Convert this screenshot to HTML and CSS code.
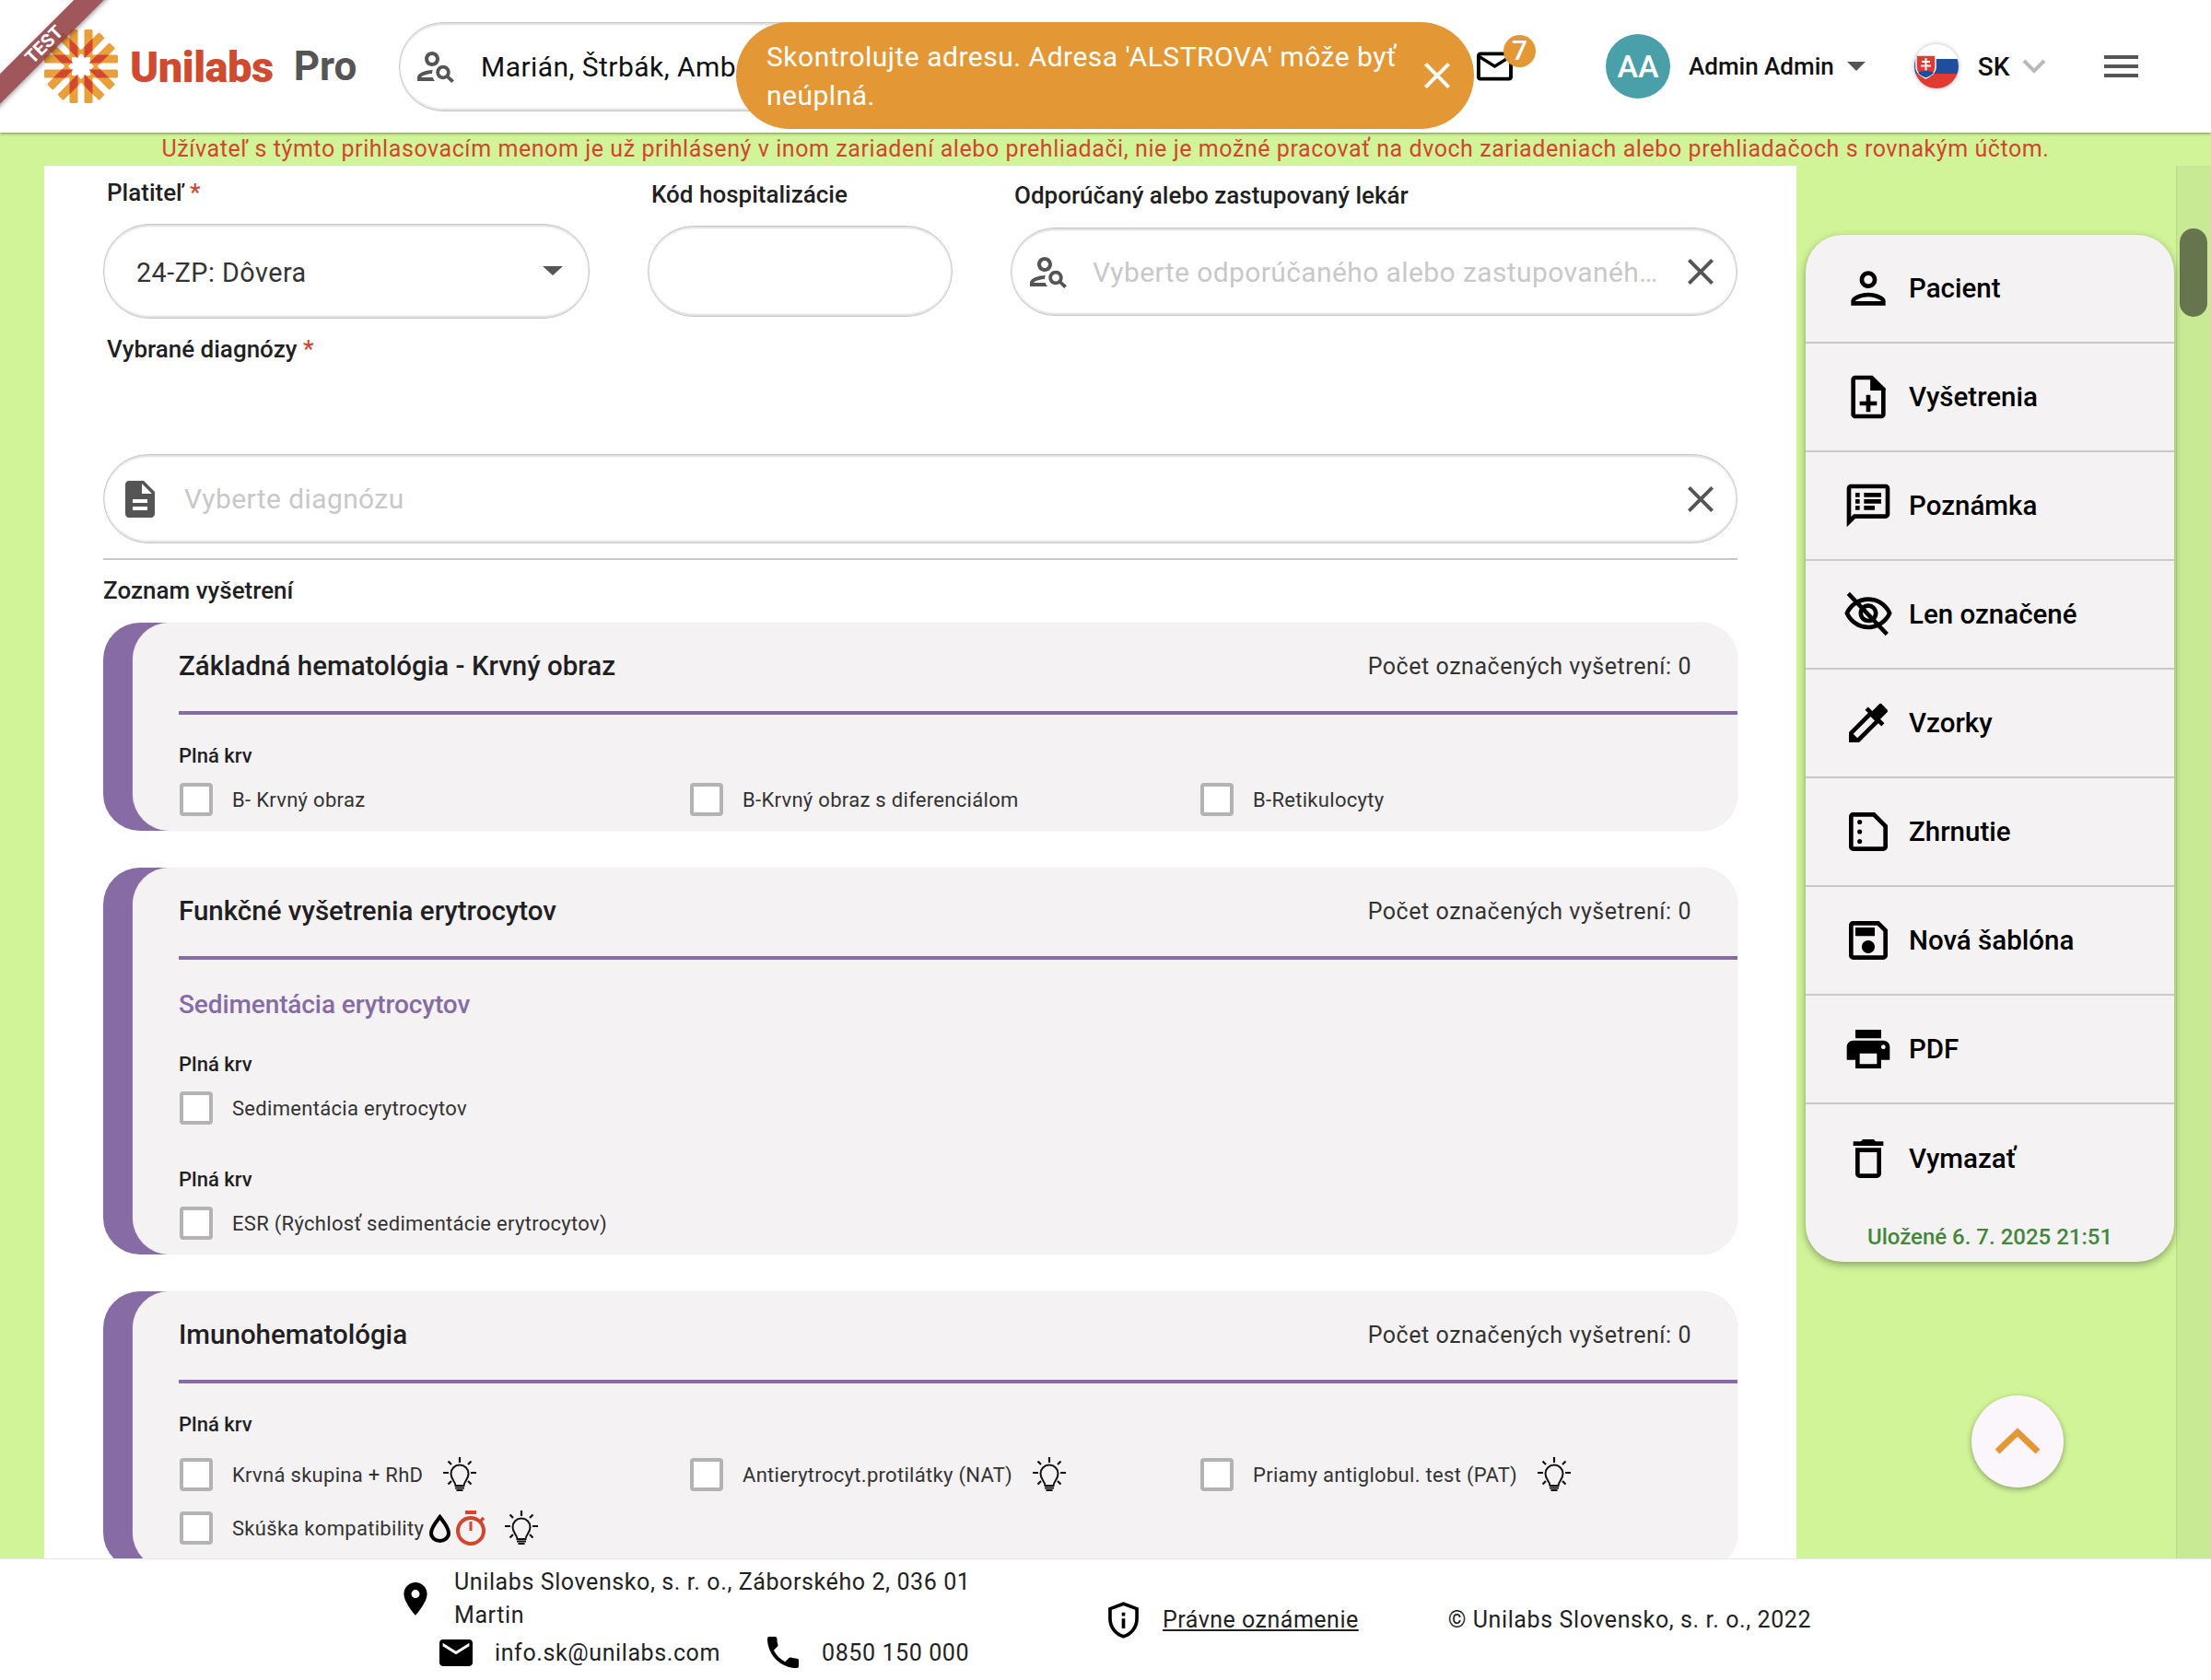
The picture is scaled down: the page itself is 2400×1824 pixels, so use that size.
FILE: index.html
```html
<!DOCTYPE html>
<html lang="sk">
<head>
<meta charset="utf-8">
<title>Unilabs Pro</title>
<link rel="stylesheet" href="styles.css">
</head>
<body>
<svg class="sprite" xmlns="http://www.w3.org/2000/svg">
  <symbol id="i-person-search" viewBox="0 0 24 24"><path d="M10 12c2.21 0 4-1.79 4-4s-1.79-4-4-4-4 1.79-4 4 1.79 4 4 4zm0-6c1.1 0 2 .9 2 2s-.9 2-2 2-2-.9-2-2 .9-2 2-2zM4 18c.22-.72 3.31-2 6-2 0-.7.13-1.37.35-1.99C7.62 13.91 2 15.27 2 18v2h9.54c-.52-.58-.93-1.25-1.19-2H4zm15.29-.73c.36-.59.57-1.27.57-2.02 0-2.13-1.75-3.85-3.86-3.85s-3.86 1.72-3.86 3.85 1.75 3.85 3.86 3.85c.74 0 1.43-.22 2.02-.57L20.59 21 22 19.59l-2.71-2.32zM16 17.2c-1.1 0-2-.9-2-2s.9-2 2-2 2 .9 2 2-.9 2-2 2z"/></symbol>
  <symbol id="i-close" viewBox="0 0 24 24"><path d="M19 6.41L17.59 5 12 10.59 6.41 5 5 6.41 10.59 12 5 17.59 6.41 19 12 13.41 17.59 19 19 17.59 13.41 12z"/></symbol>
  <symbol id="i-person" viewBox="0 0 24 24"><path d="M12 6c1.1 0 2 .9 2 2s-.9 2-2 2-2-.9-2-2 .9-2 2-2m0 10c2.7 0 5.8 1.29 6 2H6c.23-.72 3.31-2 6-2m0-12C9.79 4 8 5.79 8 8s1.79 4 4 4 4-1.79 4-4-1.79-4-4-4zm0 10c-2.67 0-8 1.34-8 4v2h16v-2c0-2.66-5.33-4-8-4z"/></symbol>
  <symbol id="i-note-add" viewBox="0 0 24 24"><path d="M14 2H6c-1.1 0-2 .9-2 2v16c0 1.1.9 2 2 2h12c1.1 0 2-.9 2-2V8l-6-6zm4 18H6V4h7v5h5v11zm-7-9v3H8v2h3v3h2v-3h3v-2h-3v-3h-2z"/><path d="M13 3h1l6 5v1h-7z"/></symbol>
  <symbol id="i-notes" viewBox="0 0 24 24"><path d="M20 2H4c-1.1 0-2 .9-2 2v18l4-4h14c1.1 0 2-.9 2-2V4c0-1.1-.9-2-2-2zm0 14H5.17L4 17.17V4h16v12zM6 6h2v2H6zm0 3h2v2H6zm0 3h2v2H6zm4-6h8v2h-8zm0 3h8v2h-8zm0 3h5v2h-5z"/></symbol>
  <symbol id="i-eye-off" viewBox="0 0 24 24"><path d="M12 6c3.79 0 7.17 2.13 8.82 5.5C19.17 14.87 15.79 17 12 17s-7.17-2.13-8.82-5.5C4.83 8.13 8.21 6 12 6m0-2C7 4 2.73 7.11 1 11.5 2.73 15.89 7 19 12 19s9.27-3.11 11-7.5C21.27 7.11 17 4 12 4zm0 5c1.38 0 2.5 1.12 2.5 2.5S13.38 14 12 14s-2.5-1.12-2.5-2.5S10.62 9 12 9m0-2c-2.48 0-4.5 2.02-4.5 4.5S9.52 16 12 16s4.5-2.02 4.5-4.5S14.48 7 12 7z"/><path d="M3.4 1.6l18 19-1.4 1.4-18-19z"/></symbol>
  <symbol id="i-colorize" viewBox="0 0 24 24"><path d="M20.71 5.63l-2.34-2.34a.996.996 0 00-1.41 0l-3.12 3.12-1.93-1.91-1.41 1.41 1.42 1.42L3 16.25V21h4.75l8.92-8.92 1.42 1.42 1.41-1.41-1.92-1.92 3.12-3.12c.4-.4.4-1.03.01-1.42zM6.92 19L5 17.08l8.06-8.06 1.92 1.92L6.92 19z"/></symbol>
  <symbol id="i-summary" viewBox="0 0 24 24"><path d="M5 3h10l6 6v10c0 1.1-.9 2-2 2H5c-1.1 0-2-.9-2-2V5c0-1.1.9-2 2-2zm0 2v14h14V9.83L14.17 5H5z"/><circle cx="8" cy="7.5" r="1.1"/><circle cx="8" cy="12" r="1.1"/><circle cx="8" cy="16.5" r="1.1"/></symbol>
  <symbol id="i-save" viewBox="0 0 24 24"><path d="M17 3H5c-1.11 0-2 .9-2 2v14c0 1.1.89 2 2 2h14c1.1 0 2-.9 2-2V7l-4-4zm2 16H5V5h11.17L19 7.83V19zm-7-7c-1.66 0-3 1.34-3 3s1.34 3 3 3 3-1.34 3-3-1.34-3-3-3zM6 6h9v4H6z"/></symbol>
  <symbol id="i-print" viewBox="0 0 24 24"><path d="M19 8H5c-1.66 0-3 1.34-3 3v6h4v4h12v-4h4v-6c0-1.66-1.34-3-3-3zm-3 11H8v-5h8v5zm3-7c-.55 0-1-.45-1-1s.45-1 1-1 1 .45 1 1-.45 1-1 1zm-1-9H6v4h12V3z"/></symbol>
  <symbol id="i-delete" viewBox="0 0 24 24"><path d="M6 19c0 1.1.9 2 2 2h8c1.1 0 2-.9 2-2V7H6v12zM8 9h8v10H8V9zm7.5-5l-1-1h-5l-1 1H5v2h14V4z"/></symbol>
  <symbol id="i-doc" viewBox="0 0 24 24"><path d="M14 2H6c-1.1 0-1.99.9-1.99 2L4 20c0 1.1.89 2 1.99 2H18c1.1 0 2-.9 2-2V8l-6-6zm2 16H8v-2h8v2zm0-4H8v-2h8v2zm-3-5V3.5L18.5 9H13z"/></symbol>
  <symbol id="i-bulb" viewBox="0 0 36 38"><path d="M18 0v6M0 17h6M30 17h6M5.500 4.500l3.500 3.500M30.500 4.500L27 8M5.500 29.500L9 26M30.500 29.500L27 26" fill="none" stroke="currentColor" stroke-width="2.200"/><path d="M13.500 31c0-4.500-5-6.500-5-13a9.500 9.500 0 0 1 19 0c0 6.500-5 8.500-5 13z" fill="none" stroke="currentColor" stroke-width="2"/><path d="M13 33.500h10M14.500 36h7" stroke="currentColor" stroke-width="2"/></symbol>
  <symbol id="i-drop" viewBox="0 0 23 31"><path d="M11.500 3C9 6.500 2 14 2 20.500a9.500 8.500 0 0 0 19 0C21 14 14 6.500 11.500 3z" fill="none" stroke="currentColor" stroke-width="4"/></symbol>
  <symbol id="i-timer" viewBox="0 0 35 38"><path d="M10 0h12v4H10zM14.500 12h3v10h-3z"/><circle cx="16" cy="22" r="14" fill="none" stroke="currentColor" stroke-width="4"/><path d="M26 12l4-4" stroke="currentColor" stroke-width="3.500"/></symbol>
</svg>

<header class="topbar">
  <div class="brand">
    <svg class="sun" viewBox="-40 -40 80 80" aria-hidden="true">
      <defs>
        <rect id="ray" x="3.500" y="-40" width="9" height="30" rx="1.500"/>
        <rect id="ray-b" x="-12.500" y="-40" width="9" height="30" rx="1.500"/>
        <path id="petal" d="M0-9.100L4.870-20.900 0-32.700-4.870-20.900z"/>
      </defs>
      <g class="sun-rays">
        <use href="#ray"/><use href="#ray-b"/>
        <use href="#ray" transform="rotate(45)"/><use href="#ray-b" transform="rotate(45)"/>
        <use href="#ray" transform="rotate(90)"/><use href="#ray-b" transform="rotate(90)"/>
        <use href="#ray" transform="rotate(135)"/><use href="#ray-b" transform="rotate(135)"/>
        <use href="#ray" transform="rotate(180)"/><use href="#ray-b" transform="rotate(180)"/>
        <use href="#ray" transform="rotate(225)"/><use href="#ray-b" transform="rotate(225)"/>
        <use href="#ray" transform="rotate(270)"/><use href="#ray-b" transform="rotate(270)"/>
        <use href="#ray" transform="rotate(315)"/><use href="#ray-b" transform="rotate(315)"/>
      </g>
      <g class="sun-petals">
        <use href="#petal" transform="rotate(22.500)"/>
        <use href="#petal" transform="rotate(67.500)"/>
        <use href="#petal" transform="rotate(112.500)"/>
        <use href="#petal" transform="rotate(157.500)"/>
        <use href="#petal" transform="rotate(202.500)"/>
        <use href="#petal" transform="rotate(247.500)"/>
        <use href="#petal" transform="rotate(292.500)"/>
        <use href="#petal" transform="rotate(337.500)"/>
      </g>
    </svg>
    <span class="brand-name">Unilabs</span>
    <span class="brand-pro">Pro</span>
  </div>

  <div class="search">
    <svg class="search-icon"><use href="#i-person-search"/></svg>
    <span class="search-text">Marián, Štrbák, Amb</span>
  </div>

  <div class="mail">
    <svg class="mail-icon" viewBox="2 4 20 16"><path d="M20 4H4c-1.100 0-1.990.9-1.990 2L2 18c0 1.100.9 2 2 2h16c1.100 0 2-.9 2-2V6c0-1.100-.9-2-2-2zm0 14H4V8l8 5 8-5v10zm-8-7L4 6h16l-8 5z"/></svg>
    <span class="mail-badge">7</span>
  </div>

  <div class="avatar">AA</div>
  <span class="user-name">Admin Admin</span>
  <span class="caret"></span>

  <svg class="flag" viewBox="0 0 48 48" aria-hidden="true">
    <rect width="48" height="16" fill="#ffffff"/>
    <rect y="16" width="48" height="16" fill="#1f4e9f"/>
    <rect y="32" width="48" height="16" fill="#e03a33"/>
    <path d="M2 12h21v13c0 6-5 9-10.500 12C7 34 2 31 2 25z" fill="#e03a33" stroke="#ffffff" stroke-width="1.500"/>
    <path d="M11.500 15h2v3h3.500v2h-3.500v2.500h4.500v2h-4.500V31h-2v-6.500H7v-2h4.500V20H8v-2h3.500z" fill="#ffffff"/>
    <path d="M4 31c2-2 3-2 4-1 1-2 8-2 9 0 1-1 2-1 4 1-2 2.500-5 4-8.500 5.500C9 35 6 33.500 4 31z" fill="#1f4e9f"/>
  </svg>
  <span class="lang">SK</span>
  <svg class="lang-chevron" viewBox="0 0 26 16"><path d="M2 2l11 11L24 2" fill="none" stroke="#b9b9bd" stroke-width="4"/></svg>

  <div class="burger"><span></span><span></span><span></span></div>

  <div class="ribbon">TEST</div>

  <div class="toast">
    <p class="toast-text">Skontrolujte adresu. Adresa 'ALSTROVA' môže byť neúplná.</p>
    <svg class="toast-close"><use href="#i-close"/></svg>
  </div>
</header>

<div class="middle">
  <p class="warning">Užívateľ s týmto prihlasovacím menom je už prihlásený v inom zariadení alebo prehliadači, nie je možné pracovať na dvoch zariadeniach alebo prehliadačoch s rovnakým účtom.</p>

  <div class="workspace">
    <main class="main">
      <div class="form-row">
        <div class="field field-payer">
          <label class="field-label">Platiteľ <span class="req">*</span></label>
          <div class="pill pill-select">
            <span class="pill-value">24-ZP: Dôvera</span>
            <span class="select-caret"></span>
          </div>
        </div>
        <div class="field field-code">
          <label class="field-label">Kód hospitalizácie</label>
          <div class="pill pill-code"></div>
        </div>
        <div class="field field-doctor">
          <label class="field-label">Odporúčaný alebo zastupovaný lekár</label>
          <div class="pill pill-doctor">
            <svg class="pill-icon"><use href="#i-person-search"/></svg>
            <span class="pill-placeholder">Vyberte odporúčaného alebo zastupovanéh…</span>
            <svg class="pill-close"><use href="#i-close"/></svg>
          </div>
        </div>
      </div>

      <label class="field-label diag-label">Vybrané diagnózy <span class="req">*</span></label>
      <div class="pill pill-diag">
        <svg class="pill-icon pill-icon-doc"><use href="#i-doc"/></svg>
        <span class="pill-placeholder">Vyberte diagnózu</span>
        <svg class="pill-close"><use href="#i-close"/></svg>
      </div>
      <hr class="rule">
      <h2 class="list-title">Zoznam vyšetrení</h2>

      <section class="card">
        <div class="card-body">
          <div class="card-head"><h3 class="card-title">Základná hematológia - Krvný obraz</h3><span class="card-count">Počet označených vyšetrení: 0</span></div>
          <div class="group">
            <h4 class="group-title">Plná krv</h4>
            <div class="checks">
              <div class="check"><span class="box"></span><span class="check-text">B- Krvný obraz</span></div>
              <div class="check"><span class="box"></span><span class="check-text">B-Krvný obraz s diferenciálom</span></div>
              <div class="check"><span class="box"></span><span class="check-text">B-Retikulocyty</span></div>
            </div>
          </div>
        </div>
      </section>

      <section class="card">
        <div class="card-body">
          <div class="card-head"><h3 class="card-title">Funkčné vyšetrenia erytrocytov</h3><span class="card-count">Počet označených vyšetrení: 0</span></div>
          <h4 class="sub-title">Sedimentácia erytrocytov</h4>
          <div class="group">
            <h4 class="group-title">Plná krv</h4>
            <div class="checks">
              <div class="check"><span class="box"></span><span class="check-text">Sedimentácia erytrocytov</span></div>
            </div>
          </div>
          <div class="group group-next">
            <h4 class="group-title">Plná krv</h4>
            <div class="checks">
              <div class="check"><span class="box"></span><span class="check-text">ESR (Rýchlosť sedimentácie erytrocytov)</span></div>
            </div>
          </div>
        </div>
      </section>

      <section class="card">
        <div class="card-body">
          <div class="card-head"><h3 class="card-title">Imunohematológia</h3><span class="card-count">Počet označených vyšetrení: 0</span></div>
          <div class="group">
            <h4 class="group-title">Plná krv</h4>
            <div class="checks checks-tall">
              <div class="check"><span class="box"></span><span class="check-text">Krvná skupina + RhD</span><svg class="bulb"><use href="#i-bulb"/></svg></div>
              <div class="check"><span class="box"></span><span class="check-text">Antierytrocyt.protilátky (NAT)</span><svg class="bulb"><use href="#i-bulb"/></svg></div>
              <div class="check"><span class="box"></span><span class="check-text">Priamy antiglobul. test (PAT)</span><svg class="bulb"><use href="#i-bulb"/></svg></div>
              <div class="check"><span class="box"></span><span class="check-text">Skúška kompatibility</span><svg class="drop"><use href="#i-drop"/></svg><svg class="timer"><use href="#i-timer"/></svg><svg class="bulb bulb-after"><use href="#i-bulb"/></svg></div>
            </div>
          </div>
        </div>
      </section>
    </main>

    <aside class="side">
      <nav class="panel">
        <a class="panel-item"><svg class="panel-icon"><use href="#i-person"/></svg><span>Pacient</span></a>
        <a class="panel-item"><svg class="panel-icon"><use href="#i-note-add"/></svg><span>Vyšetrenia</span></a>
        <a class="panel-item"><svg class="panel-icon"><use href="#i-notes"/></svg><span>Poznámka</span></a>
        <a class="panel-item"><svg class="panel-icon"><use href="#i-eye-off"/></svg><span>Len označené</span></a>
        <a class="panel-item"><svg class="panel-icon"><use href="#i-colorize"/></svg><span>Vzorky</span></a>
        <a class="panel-item"><svg class="panel-icon"><use href="#i-summary"/></svg><span>Zhrnutie</span></a>
        <a class="panel-item"><svg class="panel-icon"><use href="#i-save"/></svg><span>Nová šablóna</span></a>
        <a class="panel-item"><svg class="panel-icon"><use href="#i-print"/></svg><span>PDF</span></a>
        <a class="panel-item"><svg class="panel-icon"><use href="#i-delete"/></svg><span>Vymazať</span></a>
        <p class="saved">Uložené 6. 7. 2025 21:51</p>
      </nav>
      <button class="to-top" type="button" aria-label="Nahor">
        <svg viewBox="0 0 50 30"><path d="M3 26L25 5l22 21" fill="none" stroke="#e39835" stroke-width="7"/></svg>
      </button>
    </aside>

    <div class="scrolltrack"><div class="scrollthumb"></div></div>
  </div>
</div>

<footer class="footer">
  <div class="contact">
    <div class="contact-address">
      <svg class="foot-pin" viewBox="5 2 14 20"><path d="M12 2C8.130 2 5 5.130 5 9c0 5.250 7 13 7 13s7-7.750 7-13c0-3.870-3.130-7-7-7zm0 9.500a2.500 2.500 0 010-5 2.500 2.500 0 010 5z"/></svg>
      <span class="address-text">Unilabs Slovensko, s. r. o., Záborského 2, 036 01 Martin</span>
    </div>
    <div class="contact-line">
      <svg class="foot-mail" viewBox="2 4 20 16"><path d="M20 4H4c-1.100 0-1.990.9-1.990 2L2 18c0 1.100.9 2 2 2h16c1.100 0 2-.9 2-2V6c0-1.100-.9-2-2-2zm0 4l-8 5-8-5V6l8 5 8-5v2z"/></svg>
      <span class="foot-text">info.sk@unilabs.com</span>
      <svg class="foot-phone" viewBox="3 3 18 18"><path d="M6.620 10.790c1.440 2.830 3.760 5.140 6.590 6.590l2.200-2.200c.27-.27.67-.36 1.020-.24 1.120.37 2.330.57 3.570.57.55 0 1 .45 1 1V20c0 .55-.45 1-1 1-9.390 0-17-7.610-17-17 0-.55.45-1 1-1h3.500c.55 0 1 .45 1 1 0 1.250.2 2.450.57 3.570.11.35.03.74-.25 1.020l-2.200 2.200z"/></svg>
      <span class="foot-text foot-text-phone">0850 150 000</span>
    </div>
  </div>
  <svg class="foot-shield" viewBox="3 1 18 22"><path d="M12 2.200l8 3v6c0 5-3.400 9.300-8 10.600-4.600-1.300-8-5.600-8-10.600v-6z" fill="none" stroke="#000" stroke-width="2"/><path d="M11 7.500h2v2h-2zM11 11h2v6h-2z"/></svg>
  <a class="foot-legal">Právne oznámenie</a>
  <span class="foot-copy">© Unilabs Slovensko, s. r. o., 2022</span>
</footer>
</body>
</html>
```

FILE: styles.css
```css
* { box-sizing: border-box; }
html, body { margin: 0; height: 100%; }
body {
  width: 2400px;
  height: 1824px;
  display: flex;
  flex-direction: column;
  overflow: hidden;
  font-family: Roboto, "Noto Sans", sans-serif;
  color: #1f1f24;
  background: #ffffff;
}
.sprite { display: none; }
svg { display: block; flex: none; fill: currentColor; }
p, h2, h3, h4 { margin: 0; font-weight: 500; }

/* top bar */
.topbar {
  position: relative;
  z-index: 5;
  flex: none;
  height: 144px;
  display: flex;
  align-items: center;
  background: #ffffff;
  box-shadow: 0 1px 3px rgba(0, 0, 0, .45);
}
.brand { width: 433px; padding-left: 48px; display: flex; align-items: center; }
.sun { width: 80px; height: 80px; }
.sun-rays { fill: #e9a03a; }
.sun-petals { fill: #d2482e; }
.brand-name {
  margin-left: 13px;
  font-size: 47px;
  font-weight: 900;
  letter-spacing: -.5px;
  color: #cf4a2f;
}
.brand-pro {
  margin-left: 22px;
  font-size: 44px;
  font-weight: 700;
  color: #555555;
}
.search {
  width: 1077px;
  height: 97px;
  display: flex;
  align-items: center;
  padding-left: 15px;
  border: 1px solid #c8c8c8;
  border-radius: 48px;
  box-shadow: inset 0 2px 2px #dddddd, inset 0 -2px 2px #dddddd;
}
.search-icon { width: 48px; height: 48px; color: #555555; }
.search-text { margin-left: 25px; font-size: 30px; letter-spacing: .45px; color: #111111; }
.mail { position: relative; margin-left: 93px; width: 39px; height: 32px; }
.mail-icon { width: 39px; height: 32px; color: #000000; }
.mail-badge {
  position: absolute;
  left: 29px;
  top: -18px;
  width: 35px;
  height: 35px;
  border-radius: 50%;
  background: #e39835;
  color: #ffffff;
  font-size: 30px;
  font-weight: 500;
  line-height: 33px;
  text-align: center;
}
.avatar {
  margin-left: 101px;
  width: 70px;
  height: 70px;
  border-radius: 50%;
  background: #4aa0a8;
  color: #ffffff;
  font-size: 34px;
  font-weight: 500;
  line-height: 70px;
  text-align: center;
}
.user-name { margin-left: 20px; font-size: 26px; font-weight: 500; color: #111111; }
.caret {
  margin-left: 14px;
  width: 0;
  height: 0;
  border-left: 10px solid transparent;
  border-right: 10px solid transparent;
  border-top: 10px solid #555555;
}
.flag {
  margin-left: 53px;
  width: 48px;
  height: 48px;
  border-radius: 50%;
  box-shadow: 0 0 5px rgba(0, 0, 0, .3);
}
.lang { margin-left: 21px; font-size: 28px; font-weight: 500; color: #111111; }
.lang-chevron { margin-left: 14px; width: 26px; height: 16px; }
.burger { margin-left: 63px; width: 37px; display: flex; flex-direction: column; gap: 6px; }
.burger span { display: block; height: 4px; background: #555555; }
.ribbon {
  position: absolute;
  left: -102px;
  top: 37px;
  width: 300px;
  height: 23px;
  transform: rotate(-45deg);
  background: rgba(143, 58, 62, .85);
  box-shadow: 0 2px 5px rgba(0, 0, 0, .35);
  color: #ffffff;
  font-size: 20px;
  font-weight: 700;
  line-height: 23px;
  text-align: center;
}
.toast {
  position: absolute;
  left: 799px;
  top: 24px;
  width: 801px;
  height: 116px;
  padding: 17px 16px 0 33px;
  display: flex;
  justify-content: space-between;
  border-radius: 58px;
  background: #e39835;
  color: #ffffff;
}
.toast-text { width: 700px; font-size: 30px; font-weight: 400; line-height: 42px; letter-spacing: .5px; }
.toast-close { margin-top: 17px; width: 48px; height: 48px; color: #ffffff; }

/* middle */
.middle { flex: 1; min-height: 0; display: flex; flex-direction: column; background: #d1f498; }
.warning {
  flex: none;
  height: 36px;
  font-size: 25px;
  font-weight: 400;
  line-height: 36px;
  letter-spacing: .57px;
  text-align: center;
  color: #d2452f;
}
.workspace { flex: 1; min-height: 0; display: flex; }
.main {
  flex: none;
  width: 1902px;
  margin-left: 48px;
  padding: 0 64px;
  overflow: hidden;
  background: #ffffff;
}

/* form */
.form-row { display: grid; grid-template-columns: 528px 331px 789px; column-gap: 63px; }
.field-label { display: block; height: 32px; padding-left: 4px; font-size: 26px; font-weight: 500; line-height: 32px; color: #1f1f24; }
.req { color: #d2452f; }
.field-payer { padding-top: 13px; }
.field-code { padding-top: 15px; }
.field-doctor { padding-top: 16px; }
.pill {
  display: flex;
  align-items: center;
  border: 1px solid #c8c8c8;
  border-radius: 50px;
  background: #ffffff;
  box-shadow: inset 0 2px 2px #dddddd, inset 0 -2px 2px #dddddd;
}
.pill-select { margin-top: 18px; height: 103px; padding: 0 28px 2px 35px; justify-content: space-between; }
.pill-select .pill-value { padding-top: 5px; }
.pill-code { margin-top: 18px; height: 99px; }
.pill-doctor { margin-top: 19px; height: 96px; padding: 0 15px 0 16px; }
.pill-value { font-size: 28.700px; letter-spacing: .5px; color: #333333; }
.select-caret {
  width: 0;
  height: 0;
  border-left: 11px solid transparent;
  border-right: 11px solid transparent;
  border-top: 10px solid #555555;
}
.pill-icon { width: 48px; height: 48px; color: #555555; }
.pill-placeholder {
  flex: 1;
  min-width: 0;
  margin-left: 24px;
  font-size: 30px;
  letter-spacing: .4px;
  color: #c8c8c8;
  white-space: nowrap;
}
.pill-close { width: 48px; height: 48px; margin-left: 10px; color: #555555; }
.diag-label { margin-top: 16px; padding-top: 1px; height: 33px; }
.pill-diag { margin-top: 98px; height: 97px; padding: 0 15px 0 15px; }
.pill-icon-doc { width: 48px; height: 48px; }
.pill-diag .pill-placeholder { margin-left: 24px; }
.rule { margin: 16px 0 0; border: 0; height: 2px; background: #c8c8c8; }
.list-title { margin-top: 17px; font-size: 26px; line-height: 32px; color: #1f1f24; }

/* cards */
.card {
  margin-top: 40px;
  padding-left: 32px;
  border-radius: 40px;
  background: linear-gradient(90deg, #866ba5 72px, transparent 72px);
}
.list-title + .card { margin-top: 19px; }
.card-body {
  padding-bottom: 16px;
  border-radius: 40px;
  background: #f5f2f4;
  box-shadow: 0 0 1px #d8d4d6;
}
.card-head {
  height: 100px;
  margin-left: 50px;
  padding: 0 50px 4px 0;
  display: flex;
  align-items: center;
  justify-content: space-between;
  border-bottom: 4px solid #866ba5;
}
.card-title { padding-top: 2px; font-size: 29.500px; font-weight: 500; color: #1f1f24; }
.card-count { padding-top: 2px; font-size: 25px; letter-spacing: .55px; color: #333333; }
.sub-title { margin: 29px 0 0 50px; font-size: 28px; line-height: 40px; letter-spacing: -.1px; color: #866ba5; }
.group { margin: 30px 0 0 50px; }
.group-next { margin-top: 45px; }
.group-title { font-size: 22px; line-height: 30px; color: #1f1f24; }
.checks { margin: 14px 0 0 1px; display: grid; grid-template-columns: repeat(3, 554px); }
.checks-tall { margin-top: 10px; grid-auto-rows: 58px; }
.check { height: 36px; display: flex; align-items: center; }
.checks-tall .check { height: 58px; }
.box {
  flex: none;
  width: 36px;
  height: 36px;
  border: 4px solid #b3b3b3;
  border-radius: 4px;
  background: #ffffff;
}
.check-text { margin-left: 21px; font-size: 22px; letter-spacing: .3px; color: #333333; }
.bulb { margin-left: 22px; width: 36px; height: 38px; color: #111111; }
.bulb-after { margin-left: 18px; }
.drop { margin-left: 6px; width: 23px; height: 31px; color: #000000; }
.timer { margin-left: 6px; width: 35px; height: 38px; color: #d2452f; }

/* side panel */
.side { position: relative; flex: none; width: 400px; margin-left: 10px; padding-top: 75px; }
.panel {
  height: 1115px;
  border-radius: 40px;
  background: #f5f2f4;
  box-shadow: 0 3px 8px rgba(0, 0, 0, .35);
}
.panel-item {
  height: 118px;
  padding-left: 40px;
  display: flex;
  align-items: center;
  gap: 16px;
  border-bottom: 2px solid #c8c8c8;
  color: #000000;
  font-size: 29.500px;
  font-weight: 500;
}
.panel-item:nth-child(9) { border-bottom: 0; }
.panel-icon { width: 56px; height: 56px; }
.saved { margin-top: 8px; font-size: 24px; line-height: 36px; text-align: center; color: #43873a; }
.to-top {
  position: absolute;
  left: 180px;
  top: 1335px;
  width: 100px;
  height: 100px;
  padding: 0 25px;
  border: 0;
  border-radius: 50%;
  background: #fbf6fb;
  box-shadow: 0 2px 6px rgba(0, 0, 0, .35);
}
.to-top svg { width: 50px; height: 30px; }
.scrolltrack { flex: none; width: 38px; margin-left: 2px; padding: 68px 4px 0; background: #c8ea95; box-shadow: inset 1px 0 1px #b8d888; }
.scrollthumb { width: 30px; height: 96px; border-radius: 15px; background: #66754d; }

/* footer */
.footer {
  flex: none;
  height: 132px;
  padding-left: 438px;
  display: flex;
  align-items: center;
  border-top: 1px solid #e8e8e8;
  background: #ffffff;
  font-size: 25px;
  letter-spacing: .6px;
  color: #1f1f24;
}
.contact { flex: none; align-self: flex-start; margin-top: 7px; width: 613px; }
.contact-address { display: flex; align-items: center; }
.foot-pin { width: 26px; height: 36px; color: #000000; }
.address-text { flex: none; margin-left: 29px; width: 575px; line-height: 36px; }
.contact-line { margin: 4px 0 0 39px; display: flex; align-items: center; height: 36px; white-space: nowrap; }
.foot-mail { width: 36px; height: 29px; color: #000000; }
.foot-text { margin-left: 24px; }
.foot-text-phone { margin-left: 25px; }
.foot-phone { margin-left: 51px; width: 34px; height: 34px; color: #000000; }
.foot-shield { margin-left: 152px; width: 33px; height: 40px; color: #000000; }
.foot-legal { margin-left: 26px; letter-spacing: .5px; text-decoration: underline; }
.foot-copy { margin-left: 97px; }
```
